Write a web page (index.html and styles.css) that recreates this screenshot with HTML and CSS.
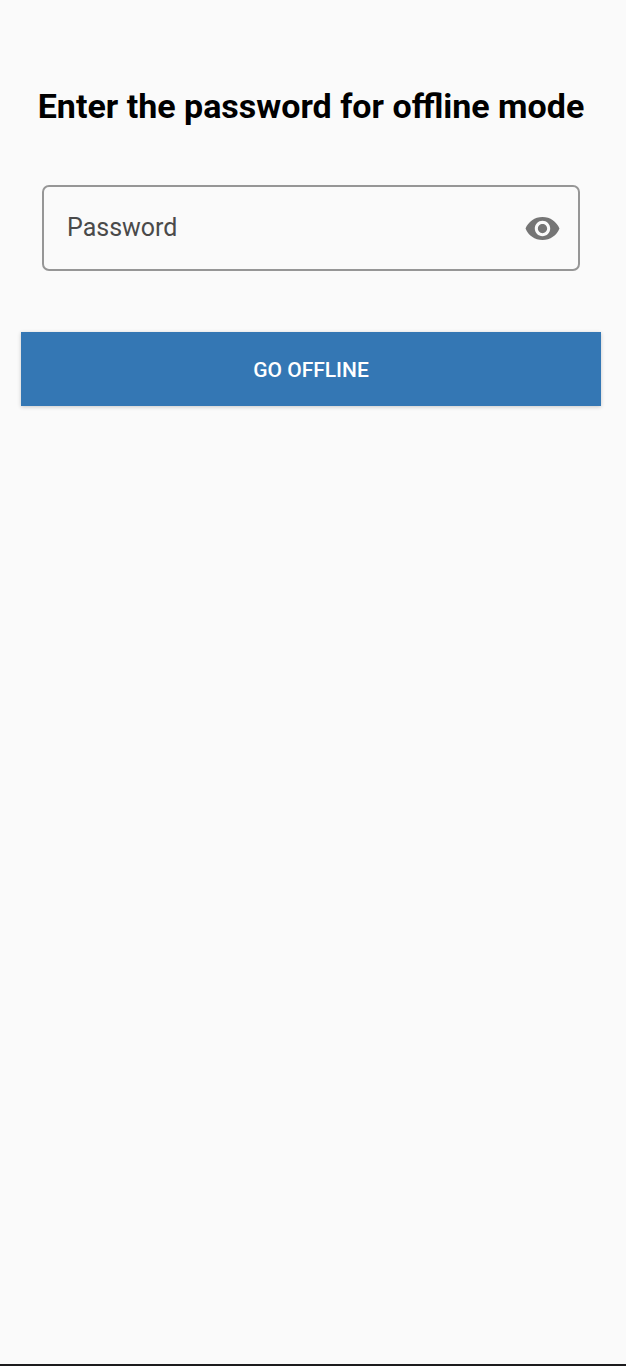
FILE: index.html
```html
<!DOCTYPE html>
<html lang="en">
<head>
    <meta charset="UTF-8">
    <meta name="viewport" content="width=device-width, initial-scale=1.0">
    <title>Offline mode</title>
    <link rel="stylesheet" href="styles.css">
</head>
<body>
    <main class="container">
        <h1 class="title">Enter the password for offline mode</h1>

        <form class="offline-form" id="offlineForm">
            <div class="field">
                <input class="field-input" type="password" id="password" placeholder="Password" aria-label="Password">
                <button class="toggle" type="button" id="togglePassword" aria-label="Show password">
                    <svg class="toggle-icon" viewBox="0 0 24 24" fill="currentColor" aria-hidden="true">
                        <path d="M12 4.5C7 4.5 2.73 7.61 1 12c1.73 4.39 6 7.5 11 7.5s9.27-3.11 11-7.5c-1.73-4.39-6-7.5-11-7.5zM12 17c-2.76 0-5-2.24-5-5s2.24-5 5-5 5 2.24 5 5-2.24 5-5 5zm0-8c-1.66 0-3 1.34-3 3s1.34 3 3 3 3-1.34 3-3-1.34-3-3-3z"/>
                    </svg>
                </button>
            </div>
            <button class="submit" type="submit">GO OFFLINE</button>
        </form>
    </main>
    <footer class="nav-bar"></footer>

    <script>
        // show or hide the typed password
        document.getElementById('togglePassword').addEventListener('click', function() {
            const input = document.getElementById('password');
            input.type = input.type === 'password' ? 'text' : 'password';
        });

        document.getElementById('offlineForm').addEventListener('submit', function(e) {
            e.preventDefault();
        });
    </script>
</body>
</html>
```

FILE: styles.css
```css
* {
    box-sizing: border-box;
}
body {
    display: flex;
    flex-direction: column;
    min-height: 100vh;
    margin: 0;
    background: #fafafa;
    font-family: Roboto, sans-serif;
}
.container {
    flex: 1;
    padding: 86px 25px 24px 21px;
}
.title {
    margin: 0 0 59px;
    color: #000;
    font-size: 34px;
    font-weight: 700;
    line-height: 40px;
    text-align: center;
}
.offline-form {
    display: flex;
    flex-direction: column;
    gap: 61px;
}
.field {
    display: flex;
    align-items: center;
    height: 86px;
    margin: 0 21px;
    padding: 0 17px 0 23px;
    border: 2px solid #969696;
    border-radius: 7px;
}
.field:focus-within {
    border-color: #3477b4;
}
.field-input {
    flex: 1;
    min-width: 0;
    padding: 0;
    border: none;
    outline: none;
    background: none;
    color: #212121;
    font-family: inherit;
    font-size: 25px;
    line-height: 32px;
}
.field-input::placeholder {
    color: #4a4a4a;
    opacity: 1;
}
.toggle {
    display: flex;
    padding: 0;
    border: none;
    background: none;
    color: #757575;
    cursor: pointer;
}
.toggle-icon {
    width: 37px;
    height: 37px;
}
.submit {
    height: 74px;
    padding: 2px 0 0;
    border: none;
    background: #3477b4;
    box-shadow: 0 1px 4px rgba(0,0,0,0.2);
    color: white;
    font-family: inherit;
    font-size: 21px;
    font-weight: 500;
    cursor: pointer;
}
.nav-bar {
    height: 2px;
    background: #1c1b1d;
}
```
